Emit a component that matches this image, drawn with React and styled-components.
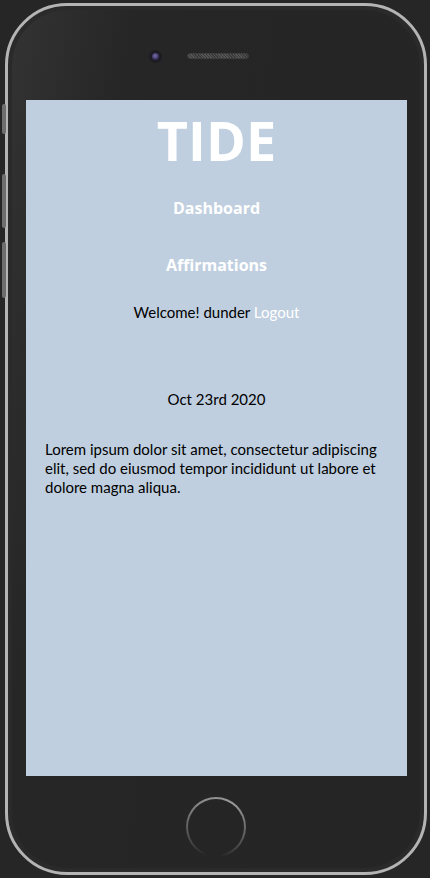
import React from 'react';
import styled, { createGlobalStyle } from 'styled-components';

const GlobalStyle = createGlobalStyle`
  html, body {
    margin: 0;
    padding: 0;
    background: #262626;
    font-family: Lato, 'Noto Sans', sans-serif;
  }
  * { box-sizing: border-box; }
`;

const Stage = styled.div`
  width: 430px;
  height: 878px;
  padding: 3px 3px 3px 5px;
  position: relative;
`;

const SideButton = styled.div`
  position: absolute;
  left: 2px;
  top: ${p => p.top}px;
  width: 4px;
  height: ${p => p.h}px;
  border-radius: 2px;
  background: #6e6e6e;
`;

const Phone = styled.div`
  width: 422px;
  height: 872px;
  border: 3px solid #b4b4b4;
  border-radius: 62px;
  background: #2a2a2a;
  padding: 4px;
`;

const Bezel = styled.div`
  height: 100%;
  border-radius: 56px;
  background: linear-gradient(100deg, #333 0%, #262626 22%, #252525 100%);
  display: flex;
  flex-direction: column;
  align-items: center;
`;

const TopBar = styled.div`
  height: 90px;
  width: 100%;
  display: flex;
  justify-content: flex-start;
  align-items: center;
  gap: 25px;
  padding-left: 137px;
  padding-top: 2px;
`;

const Camera = styled.div`
  width: 13px;
  height: 13px;
  border-radius: 50%;
  background: #1c1c22;
  display: flex;
  align-items: center;
  justify-content: center;

  &::after {
    content: '';
    width: 7px;
    height: 7px;
    border-radius: 50%;
    background: radial-gradient(circle at 45% 40%, #7a70a8 0%, #3a3260 60%, #1e1a30 100%);
  }
`;

const Speaker = styled.div`
  width: 62px;
  height: 6px;
  border-radius: 3px;
  background: repeating-linear-gradient(45deg, #555 0 1px, #3a3a3a 1px 2px);
  border: 1px solid #3d3d3d;
`;

const Screen = styled.div`
  width: 381px;
  height: 676px;
  margin-left: 1px;
  background: #bfcfdf;
  display: flex;
  flex-direction: column;
  align-items: center;
  padding: 0 19px;
  color: #000;
`;

const Title = styled.h1`
  margin: 8px 0 0;
  font-family: 'Open Sans', sans-serif;
  font-size: 54px;
  line-height: 64px;
  font-weight: 700;
  color: #fff;
`;

const NavLink = styled.a`
  color: #fff;
  font-family: 'Open Sans', sans-serif;
  font-weight: 700;
  font-size: 16px;
  line-height: 22px;
  margin-top: ${p => p.mt}px;
  text-decoration: none;
`;

const Welcome = styled.p`
  margin: 26px 0 0;
  font-size: 15px;
  line-height: 20px;
`;

const Logout = styled.span`
  color: #fff;
`;

const DateLine = styled.p`
  margin: 67px 0 0;
  font-size: 15px;
  line-height: 20px;
`;

const Entry = styled.p`
  align-self: stretch;
  margin: 31px 0 0;
  font-size: 15px;
  line-height: 19px;
`;

const BottomBar = styled.div`
  flex: 1;
  width: 100%;
  display: flex;
  justify-content: center;
  align-items: center;
  padding-top: 10px;
`;

const HomeButton = styled.div`
  width: 60px;
  height: 60px;
  border-radius: 50%;
  background: conic-gradient(from 200deg, #262626 0deg, #888 120deg, #999 200deg, #262626 330deg);
  padding: 2px;

  &::after {
    content: '';
    display: block;
    width: 100%;
    height: 100%;
    border-radius: 50%;
    background: #252525;
  }
`;

export default function App() {
  return (
    <>
      <GlobalStyle />
      <Stage>
        <SideButton top={104} h={30} />
        <SideButton top={174} h={54} />
        <SideButton top={242} h={56} />
        <Phone>
          <Bezel>
            <TopBar>
              <Camera />
              <Speaker />
            </TopBar>
            <Screen>
              <Title>TIDE</Title>
              <NavLink mt={25}>Dashboard</NavLink>
              <NavLink mt={35}>Affirmations</NavLink>
              <Welcome>
                Welcome! dunder <Logout>Logout</Logout>
              </Welcome>
              <DateLine>Oct 23rd 2020</DateLine>
              <Entry>
                Lorem ipsum dolor sit amet, consectetur adipiscing elit, sed do eiusmod tempor incididunt ut labore et dolore magna aliqua.
              </Entry>
            </Screen>
            <BottomBar>
              <HomeButton />
            </BottomBar>
          </Bezel>
        </Phone>
      </Stage>
    </>
  );
}
